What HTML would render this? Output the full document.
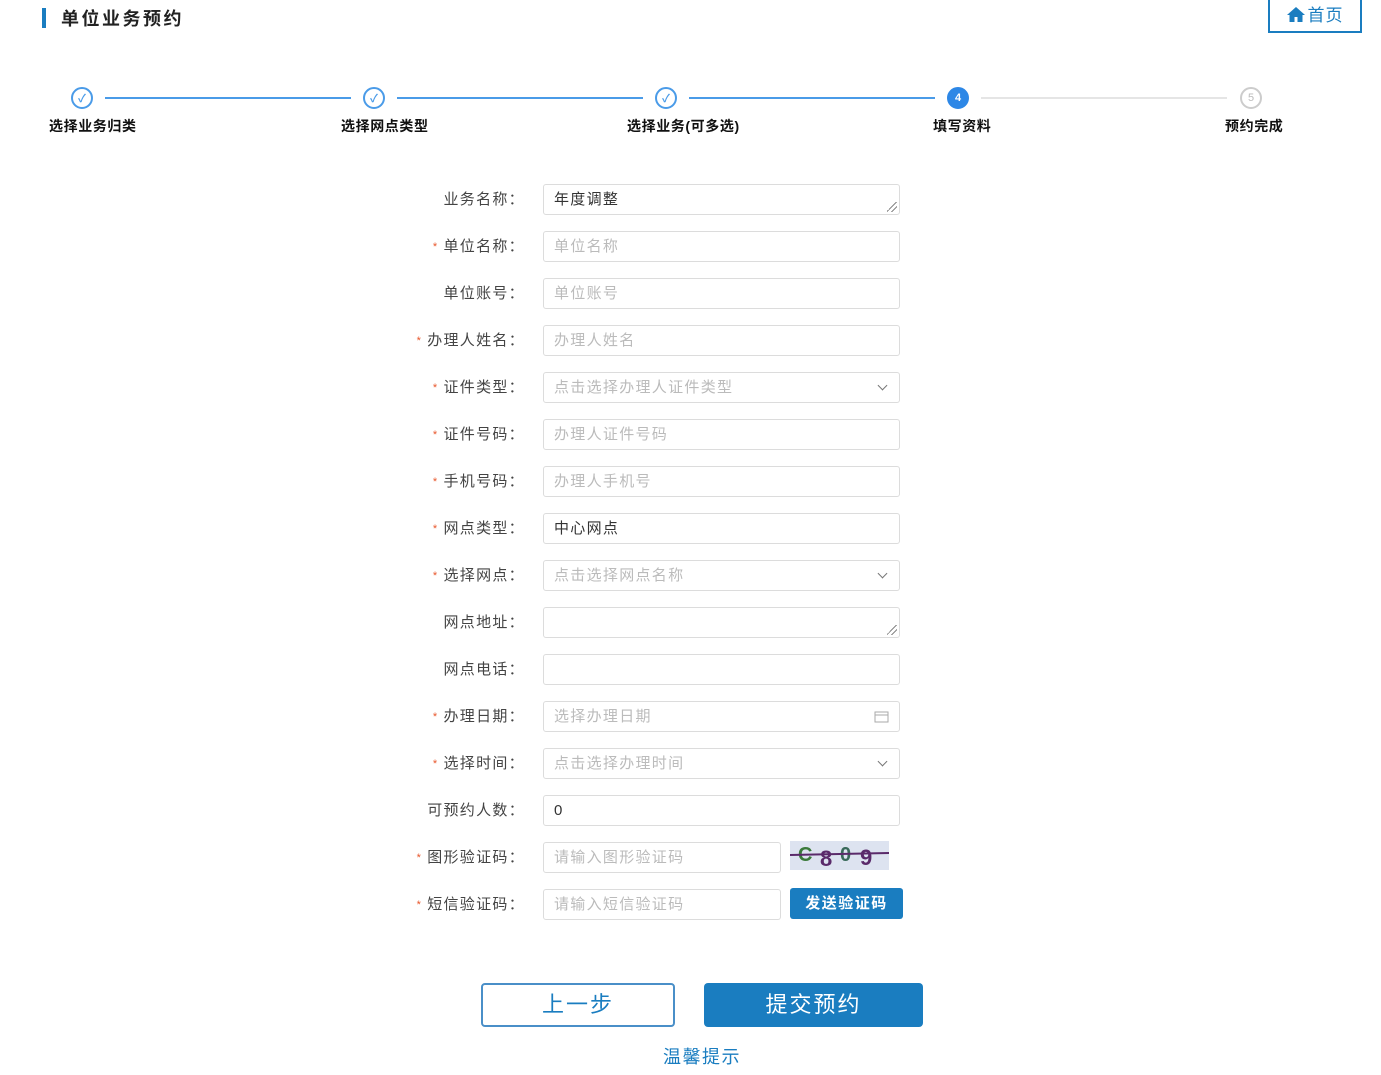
<!DOCTYPE html>
<html><head><meta charset="utf-8"><style>
*{box-sizing:border-box;margin:0;padding:0}
body{width:1381px;height:1075px;background:#fff;font-family:"Liberation Sans","Noto Sans CJK SC",sans-serif;position:relative;overflow:hidden;color:#333}
.abs{position:absolute}
.title{left:42px;top:8px;height:20px;border-left:4px solid #1a7dc0;padding-left:15px;font-size:18px;letter-spacing:2.5px;font-weight:bold;line-height:22px;color:#222}
.home{left:1268px;top:0;width:94px;height:33px;border:2px solid #1a7dc0;border-top:none;color:#1a7dc0;font-size:17px;line-height:32px;text-align:center;letter-spacing:1px}
.circ{width:22px;height:22px;border-radius:50%;border:2px solid #4a9be8;top:87px;display:flex;align-items:center;justify-content:center;font-size:11px;font-weight:bold}
.line{top:97px;height:2px;background:#4a9be8}
.step{top:116px;font-size:14px;letter-spacing:0.6px;font-weight:bold;color:#111}
.lbl{width:215px;left:310px;text-align:right;font-size:15px;letter-spacing:1.3px;color:#444;line-height:31px}
.lbl i{color:#e8552a;font-style:normal;font-size:11px;margin-right:5px;vertical-align:1px}
.inp{left:543px;width:357px;height:31px;border:1px solid #dcdcdc;border-radius:3px;font-size:15px;letter-spacing:1.3px;line-height:29px;padding-left:10px;color:#bbb}
.inp.v{color:#333}
.chev{position:absolute;right:13px;top:9px;width:7px;height:7px;border-right:1.5px solid #777;border-bottom:1.5px solid #777;transform:rotate(45deg)}
.rz{position:absolute;right:2px;bottom:2px;width:10px;height:10px;background:linear-gradient(135deg,transparent 45%,#888 45%,#888 52%,transparent 52%,transparent 70%,#888 70%,#888 77%,transparent 77%)}
</style></head><body>
<div class="abs title">单位业务预约</div>
<div class="abs home"><svg width="18" height="15" viewBox="0 0 18 15" style="vertical-align:-1px;margin-right:3px"><path d="M9 0L0 8h2.5v7h5v-5h3v5h5V8H18z" fill="#1a7dc0"/></svg>首页</div>

<div class="abs circ" style="left:71px;color:#4a9be8">✓</div>
<div class="abs line" style="left:105px;width:246px"></div>
<div class="abs circ" style="left:363px;color:#4a9be8">✓</div>
<div class="abs line" style="left:397px;width:246px"></div>
<div class="abs circ" style="left:655px;color:#4a9be8">✓</div>
<div class="abs line" style="left:689px;width:246px"></div>
<div class="abs circ" style="left:947px;background:#2d87e6;border-color:#2d87e6;color:#fff">4</div>
<div class="abs line" style="left:981px;width:246px;background:#e5e5e5"></div>
<div class="abs circ" style="left:1240px;border-color:#ccc;color:#bbb;font-weight:normal">5</div>
<div class="abs step" style="left:49px">选择业务归类</div>
<div class="abs step" style="left:341px">选择网点类型</div>
<div class="abs step" style="left:627px">选择业务(可多选)</div>
<div class="abs step" style="left:933px">填写资料</div>
<div class="abs step" style="left:1225px">预约完成</div>

<div class="abs lbl" style="top:184px">业务名称：</div><div class="abs inp v" style="top:184px">年度调整<span class="rz"></span></div>
<div class="abs lbl" style="top:231px"><i>*</i>单位名称：</div><div class="abs inp" style="top:231px">单位名称</div>
<div class="abs lbl" style="top:278px">单位账号：</div><div class="abs inp" style="top:278px">单位账号</div>
<div class="abs lbl" style="top:325px"><i>*</i>办理人姓名：</div><div class="abs inp" style="top:325px">办理人姓名</div>
<div class="abs lbl" style="top:372px"><i>*</i>证件类型：</div><div class="abs inp" style="top:372px">点击选择办理人证件类型<span class="chev"></span></div>
<div class="abs lbl" style="top:419px"><i>*</i>证件号码：</div><div class="abs inp" style="top:419px">办理人证件号码</div>
<div class="abs lbl" style="top:466px"><i>*</i>手机号码：</div><div class="abs inp" style="top:466px">办理人手机号</div>
<div class="abs lbl" style="top:513px"><i>*</i>网点类型：</div><div class="abs inp v" style="top:513px">中心网点</div>
<div class="abs lbl" style="top:560px"><i>*</i>选择网点：</div><div class="abs inp" style="top:560px">点击选择网点名称<span class="chev"></span></div>
<div class="abs lbl" style="top:607px">网点地址：</div><div class="abs inp" style="top:607px"><span class="rz"></span></div>
<div class="abs lbl" style="top:654px">网点电话：</div><div class="abs inp" style="top:654px"></div>
<div class="abs lbl" style="top:701px"><i>*</i>办理日期：</div><div class="abs inp" style="top:701px">选择办理日期<svg style="position:absolute;right:10px;top:8px" width="15" height="13" viewBox="0 0 15 13"><rect x="1" y="2" width="13" height="10" fill="none" stroke="#aaa"/><line x1="1" y1="5" x2="14" y2="5" stroke="#aaa"/></svg></div>
<div class="abs lbl" style="top:748px"><i>*</i>选择时间：</div><div class="abs inp" style="top:748px">点击选择办理时间<span class="chev"></span></div>
<div class="abs lbl" style="top:795px">可预约人数：</div><div class="abs inp v" style="top:795px">0</div>
<div class="abs lbl" style="top:842px"><i>*</i>图形验证码：</div><div class="abs inp" style="top:842px;width:238px">请输入图形验证码</div>
<div class="abs" style="left:790px;top:841px;width:99px;height:29px;background:#dde3f0;overflow:hidden">
<svg width="99" height="29"><text x="8" y="20" font-size="20" font-weight="bold" fill="#3a7a3a" font-family="Liberation Sans">C</text><text x="30" y="25" font-size="22" font-weight="bold" fill="#5a2a6a" font-family="Liberation Sans">8</text><text x="50" y="20" font-size="20" font-weight="bold" fill="#3a6a5a" font-family="Liberation Sans">0</text><text x="70" y="24" font-size="22" font-weight="bold" fill="#5a2a6a" font-family="Liberation Sans">9</text><line x1="0" y1="14" x2="99" y2="12" stroke="#5a2a6a" stroke-width="2"/></svg></div>
<div class="abs lbl" style="top:889px"><i>*</i>短信验证码：</div><div class="abs inp" style="top:889px;width:238px">请输入短信验证码</div>
<div class="abs" style="left:790px;top:888px;width:113px;height:31px;background:#1a7dc0;border-radius:3px;color:#fff;font-size:15px;letter-spacing:1.5px;font-weight:bold;line-height:31px;text-align:center">发送验证码</div>

<div class="abs" style="left:481px;top:983px;width:194px;height:44px;border:2px solid #4a8fc8;border-radius:4px;color:#1a7dc0;font-size:22px;letter-spacing:2px;line-height:40px;text-align:center">上一步</div>
<div class="abs" style="left:704px;top:983px;width:219px;height:44px;background:#1a7dc0;border-radius:4px;color:#fff;font-size:22px;letter-spacing:2px;line-height:44px;text-align:center">提交预约</div>
<div class="abs" style="left:663px;top:1043px;color:#1a7dc0;font-size:18px;letter-spacing:1.5px">温馨提示</div>
</body></html>
